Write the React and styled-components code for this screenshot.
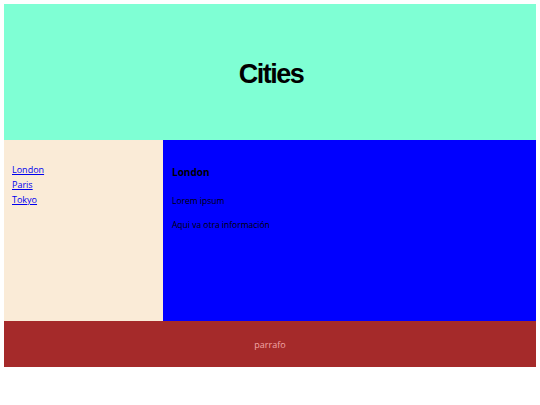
import React from "react";
import styled, { createGlobalStyle } from "styled-components";

const GlobalStyle = createGlobalStyle`
  body {
    margin: 4px;
    font-family: "Open Sans", "Liberation Sans", sans-serif;
  }
`;

const Page = styled.div`
  display: grid;
  grid-template-columns: 159px 1fr;
  grid-template-rows: 136px 181px 46px;
  width: 532px;
`;

const Header = styled.header`
  grid-column: 1 / 3;
  background: aquamarine;
  display: flex;
  align-items: center;
  justify-content: center;
`;

const Title = styled.h1`
  margin: 0;
  font-family: "Liberation Sans", Arial, sans-serif;
  font-weight: 700;
  font-size: 27px;
  letter-spacing: -1.5px;
  color: #000;
  transform: translate(1px, 2px);
`;

const Nav = styled.nav`
  background: antiquewhite;
  padding: 22px 8px;
  display: flex;
  flex-direction: column;
`;

const NavLink = styled.a`
  font-size: 9px;
  line-height: 15px;
  color: #0000ee;
  text-decoration: underline;
`;

const Article = styled.article`
  background: blue;
  padding: 25px 9px;
  color: #000;
`;

const Heading = styled.h2`
  margin: 0 0 16px;
  font-size: 10px;
  font-weight: 700;
`;

const Para = styled.p`
  margin: 0 0 13px;
  font-size: 8.5px;
  line-height: 11px;
`;

const Footer = styled.footer`
  grid-column: 1 / 3;
  background: brown;
  display: flex;
  align-items: center;
  justify-content: center;
`;

const FooterText = styled.p`
  margin: 0;
  font-size: 9px;
  color: #f2a6a6;
`;

export default function App() {
  return (
    <>
      <GlobalStyle />
      <Page>
        <Header>
          <Title>Cities</Title>
        </Header>
        <Nav>
          <NavLink href="#">London</NavLink>
          <NavLink href="#">Paris</NavLink>
          <NavLink href="#">Tokyo</NavLink>
        </Nav>
        <Article>
          <Heading>London</Heading>
          <Para>Lorem ipsum</Para>
          <Para>Aqui va otra información</Para>
        </Article>
        <Footer>
          <FooterText>parrafo</FooterText>
        </Footer>
      </Page>
    </>
  );
}
